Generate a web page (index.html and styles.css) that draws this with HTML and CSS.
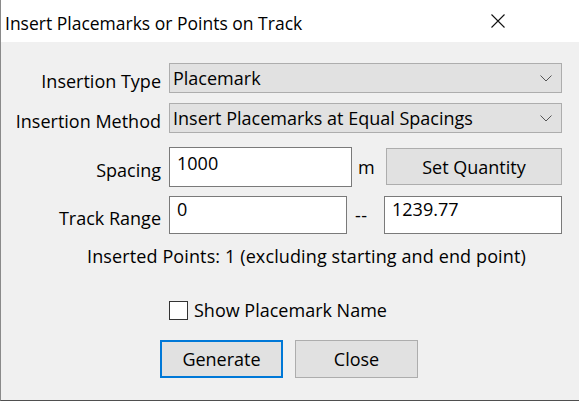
FILE: index.html
```html
<!DOCTYPE html>
<html lang="en">

<head>
    <meta charset="UTF-8">
    <meta name="viewport" content="width=device-width, initial-scale=1.0">
    <title>Insert Placemarks or Points on Track</title>
    <link rel="stylesheet" href="styles.css">
</head>

<body>
    <div class="dialog">
        <div class="titlebar">
            <span class="title">Insert Placemarks or Points on Track</span>
            <button type="button" class="close-x" aria-label="Close">
                <svg width="14" height="14" viewBox="0 0 14 14">
                    <path d="M0.5 0.5 L13.5 13.5 M13.5 0.5 L0.5 13.5" stroke="#111" stroke-width="1.1" fill="none" />
                </svg>
            </button>
        </div>

        <div class="content">
            <div class="row row-type">
                <label class="label" for="insertType">Insertion Type</label>
                <div class="combo" id="insertType">
                    <span>Placemark</span>
                    <svg class="chevron" width="12" height="7" viewBox="0 0 12 7">
                        <path d="M0.5 0.5 L6 6 L11.5 0.5" stroke="#555" stroke-width="1" fill="none" />
                    </svg>
                </div>
            </div>

            <div class="row row-method">
                <label class="label" for="insertMethod">Insertion Method</label>
                <div class="combo" id="insertMethod">
                    <span>Insert Placemarks at Equal Spacings</span>
                    <svg class="chevron" width="12" height="7" viewBox="0 0 12 7">
                        <path d="M0.5 0.5 L6 6 L11.5 0.5" stroke="#555" stroke-width="1" fill="none" />
                    </svg>
                </div>
            </div>

            <div class="row row-spacing">
                <label class="label" for="spacing">Spacing</label>
                <div class="controls">
                    <input type="text" id="spacing" class="field field-spacing" value="1000">
                    <span class="unit">m</span>
                    <button type="button" class="btn btn-quantity">Set Quantity</button>
                </div>
            </div>

            <div class="row row-range">
                <label class="label" for="rangeFrom">Track Range</label>
                <div class="controls">
                    <input type="text" id="rangeFrom" class="field field-range" value="0">
                    <span class="dash">--</span>
                    <input type="text" id="rangeTo" class="field field-range" value="1239.77">
                </div>
            </div>

            <p class="info">Inserted Points: 1 (excluding starting and end point)</p>

            <div class="check-row">
                <span class="checkbox"></span>
                <span>Show Placemark Name</span>
            </div>

            <div class="actions">
                <button type="button" class="btn btn-action btn-default">Generate</button>
                <button type="button" class="btn btn-action">Close</button>
            </div>
        </div>
    </div>
</body>

</html>
```

FILE: styles.css
```css
body {
    margin: 0;
    padding: 0;
    background-color: #f0f0f0;
    font-family: "Segoe UI", "Open Sans", "Noto Sans", sans-serif;
    font-size: 18px;
    color: #000;
}

.dialog {
    width: 579px;
    height: 401px;
    box-sizing: border-box;
    border-left: 1px solid #8a8a8a;
    border-bottom: 1px solid #4f4f4f;
    background-color: #f0f0f0;
    display: flex;
    flex-direction: column;
}

/* white caption bar */
.titlebar {
    height: 42px;
    background-color: #fff;
    display: flex;
    align-items: center;
    justify-content: space-between;
    padding-left: 4px;
}

.title {
    font-size: 17.5px;
    padding-top: 3px;
}

.close-x {
    border: none;
    background: none;
    padding: 0;
    width: 46px;
    height: 42px;
    margin-right: 58px;
    display: flex;
    align-items: center;
    justify-content: center;
}

.content {
    padding-top: 21px;
}

.row {
    display: flex;
    align-items: center;
}

.row-method {
    margin-top: 10px;
}

.row-spacing {
    margin-top: 14px;
}

.row-range {
    margin-top: 9px;
}

.label {
    width: 160px;
    margin-right: 8px;
    text-align: right;
    padding-top: 6px;
}

.combo {
    width: 393px;
    height: 30px;
    box-sizing: border-box;
    border: 1px solid #adadad;
    background-color: #e1e1e1;
    display: flex;
    align-items: center;
    justify-content: space-between;
    padding: 0 9px 0 3px;
}

.controls {
    width: 393px;
    display: flex;
    align-items: center;
}

.field {
    box-sizing: border-box;
    border: 1px solid #7a7a7a;
    background-color: #fff;
    font-family: inherit;
    font-size: 18px;
    line-height: 24px;
    margin: 0;
    outline: none;
}

.field-spacing {
    width: 183px;
    height: 40px;
    padding: 3px 7px 11px;
}

.field-range {
    width: 178px;
    height: 38px;
    padding: 0 7px 12px;
}

.unit {
    width: 34px;
    padding-left: 6px;
    box-sizing: border-box;
}

.dash {
    width: 37px;
    padding-left: 8px;
    box-sizing: border-box;
    letter-spacing: 0.5px;
}

.btn {
    box-sizing: border-box;
    border: 1px solid #adadad;
    background-color: #e1e1e1;
    font-family: inherit;
    font-size: 18px;
    color: #000;
    padding: 0;
    margin: 0;
}

.btn-quantity {
    width: 176px;
    height: 37px;
    align-self: flex-start;
    margin-top: 1px;
}

.info {
    margin: 10px 0 0;
    padding-left: 86px;
    line-height: 24px;
    letter-spacing: 0.12px;
}

.check-row {
    margin-top: 32px;
    height: 20px;
    display: flex;
    align-items: center;
    padding-left: 168px;
}

.checkbox {
    width: 19px;
    height: 19px;
    box-sizing: border-box;
    border: 1px solid #333;
    background-color: #fff;
    margin-right: 6px;
}

.actions {
    margin-top: 20px;
    padding-left: 159px;
    display: flex;
    gap: 12px;
}

.btn-action {
    width: 123px;
    height: 38px;
}

.btn-default {
    border: 2px solid #0078d7;
}
```
